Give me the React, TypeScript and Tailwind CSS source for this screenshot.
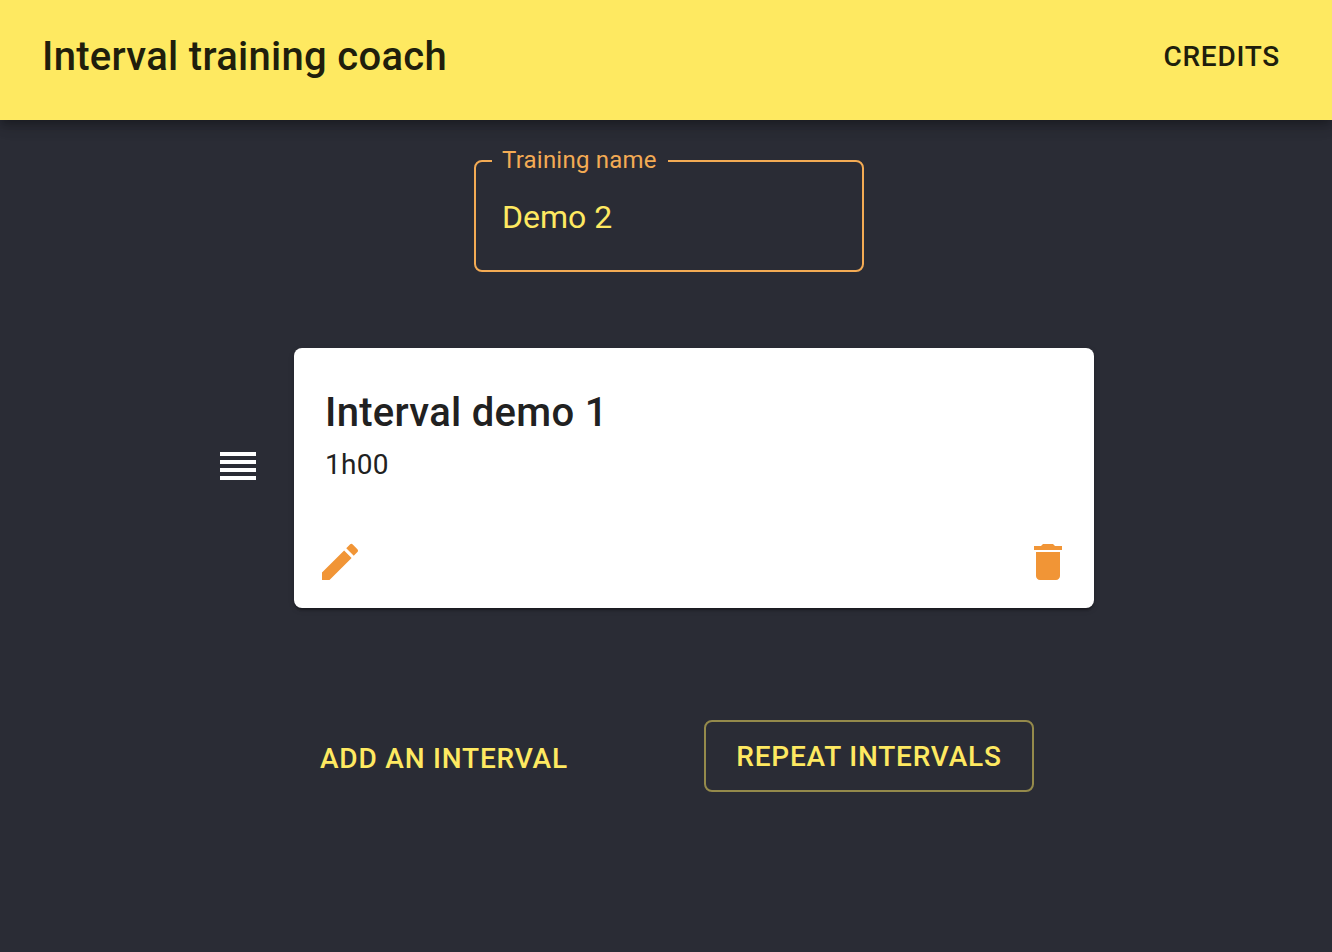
export default function App() {
  return (
    <div className="flex h-[952px] w-[1332px] flex-col overflow-hidden bg-[#2a2c35] font-['Roboto',sans-serif]">
      <header className="relative flex h-[120px] shrink-0 items-start justify-between bg-[#fee961] pt-[32px] pr-[52px] pl-[42px] text-[#201e0c] shadow-[0_4px_8px_-2px_rgba(0,0,0,0.2),0_8px_10px_0_rgba(0,0,0,0.14),0_2px_20px_0_rgba(0,0,0,0.12)]">
        <h1 className="text-[40px] leading-[50px] font-medium tracking-[0.3px]">Interval training coach</h1>
        <button className="text-[28px] leading-[49px] font-medium tracking-[0.75px]">CREDITS</button>
      </header>
      <main className="flex flex-col">
        <fieldset className="mt-[26px] ml-[474px] h-[126px] w-[390px] rounded-[8px] border-2 border-[#f3ab54] pl-[16px]">
          <legend className="h-[30px] w-[176px] pl-[10px] text-[24px] leading-[28px] tracking-[0.22px] text-[#f3ab54]">Training name</legend>
          <div className="mt-[22px] pl-[10px] text-[32px] leading-[38px] text-[#fee961]">Demo 2</div>
        </fieldset>
        <section className="mt-[76px] ml-[220px] flex h-[260px] items-center">
          <svg width="36" height="28" viewBox="0 0 36 28" fill="white" className="mt-[-24px] mr-[38px]">
            <path d="M0 0h36v4H0zM0 8h36v4H0zM0 16h36v4H0zM0 24h36v4H0z" />
          </svg>
          <article className="flex h-[260px] w-[800px] flex-col rounded-[8px] bg-white px-[31px] pt-[41px] text-[#212121] shadow-[0_4px_2px_-2px_rgba(0,0,0,0.2),0_2px_2px_0_rgba(0,0,0,0.14),0_2px_6px_0_rgba(0,0,0,0.12)]">
            <h2 className="text-[40px] leading-[48px] font-medium tracking-[0.3px]">Interval demo 1</h2>
            <p className="mt-[8px] text-[28px] leading-[40px] tracking-[0.28px]">1h00</p>
            <div className="mt-[53px] flex justify-between">
              <svg width="48" height="48" viewBox="0 0 24 24" fill="#f19536" className="ml-[-9px]">
                <path d="M3 17.25V21h3.75L17.81 9.94l-3.75-3.75L3 17.25zM20.71 7.04c.39-.39.39-1.02 0-1.41l-2.34-2.34a.9959.9959 0 0 0-1.41 0l-1.83 1.83 3.75 3.75 1.83-1.83z" />
              </svg>
              <svg width="48" height="48" viewBox="0 0 24 24" fill="#f19536" className="mr-[-9px]">
                <path d="M6 19c0 1.1.9 2 2 2h8c1.1 0 2-.9 2-2V7H6v12zM19 4h-3.5l-1-1h-5l-1 1H5v2h14V4z" />
              </svg>
            </div>
          </article>
        </section>
        <div className="mt-[112px] flex items-center pl-[320px] text-[28px] font-medium tracking-[0.8px] text-[#fee961]">
          <button className="mt-[6px] w-[384px] text-left">ADD AN INTERVAL</button>
          <button className="h-[72px] w-[330px] rounded-[8px] border-2 border-[#948a4b] pt-[2px]">REPEAT INTERVALS</button>
        </div>
      </main>
    </div>
  );
}
